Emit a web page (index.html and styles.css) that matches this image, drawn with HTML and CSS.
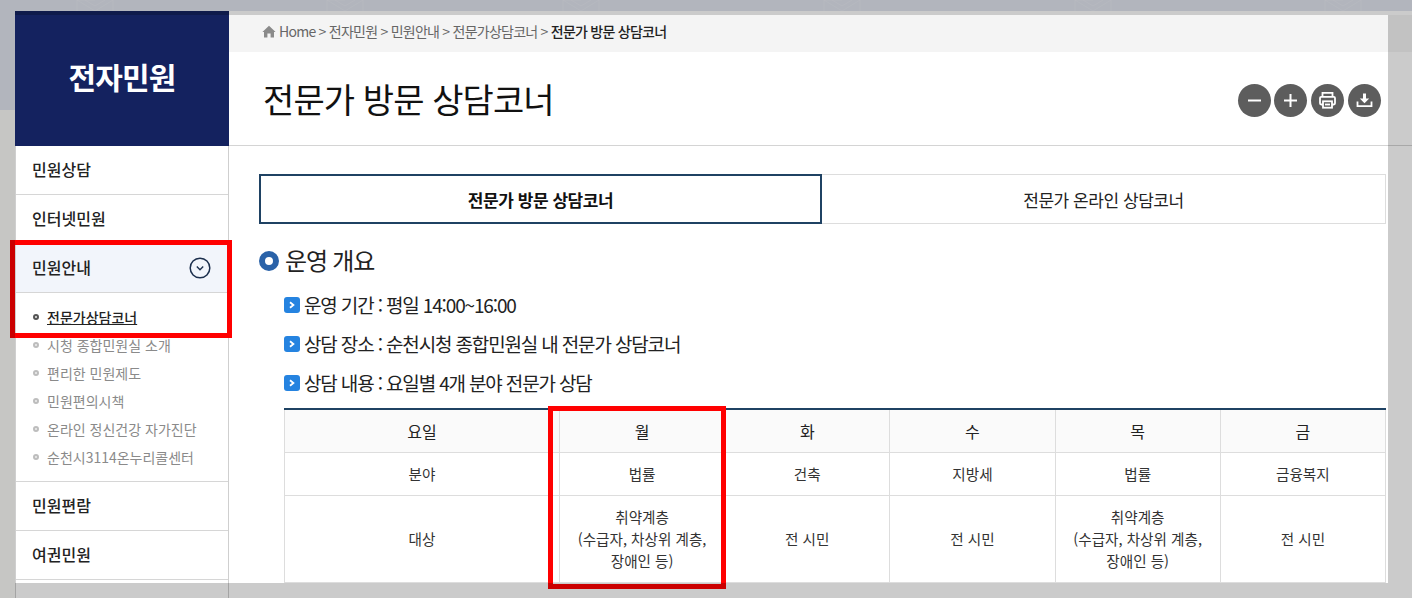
FILE: index.html
```html
<!DOCTYPE html>
<html lang="ko">
<head>
<meta charset="utf-8">
<title>전문가 방문 상담코너</title>
<link rel="stylesheet" href="styles.css">
</head>
<body>
<div class="stage">
  <svg class="pattern" width="1412" height="11" viewBox="0 0 1412 11" fill="none" stroke="#fff" stroke-opacity=".16" aria-hidden="true">
    <defs>
      <g id="mark"><path d="M0 0 18 11M8 0 18 6M18 0H0M36 0 18 11M28 0 18 6M0 0V11M36 0V11"/></g>
    </defs>
    <use href="#mark" x="77"/><use href="#mark" x="327"/><use href="#mark" x="563"/><use href="#mark" x="824"/><use href="#mark" x="1075"/><use href="#mark" x="1325"/>
  </svg>
  <aside class="sidebar">
    <h2 class="logo">전자민원</h2>
    <nav class="nav">
      <a class="nav-item">민원상담</a>
      <a class="nav-item">인터넷민원</a>
      <a class="nav-item nav-open">민원안내
        <svg class="nav-toggle" width="22" height="22" viewBox="0 0 22 22" fill="none" stroke="#1c2f4d" aria-hidden="true">
          <circle cx="11" cy="11" r="9.8" stroke-width="1.5"/><path d="M7.8 9.6 11 12.8l3.2-3.2" stroke-width="1.4"/>
        </svg>
      </a>
      <ul class="sub">
        <li class="sub-item sub-active"><span>전문가상담코너</span></li>
        <li class="sub-item"><span>시청 종합민원실 소개</span></li>
        <li class="sub-item"><span>편리한 민원제도</span></li>
        <li class="sub-item"><span>민원편의시책</span></li>
        <li class="sub-item"><span>온라인 정신건강 자가진단</span></li>
        <li class="sub-item"><span>순천시3114온누리콜센터</span></li>
      </ul>
      <a class="nav-item">민원편람</a>
      <a class="nav-item">여권민원</a>
    </nav>
  </aside>
  <main class="main">
    <div class="crumbs">
      <svg class="home" width="14" height="13" viewBox="0 0 14 13" aria-hidden="true"><path fill="#8a8a8a" d="M7 .8 13.6 7H12v5.4H8.6V8.6H5.4v3.8H2V7H.4z"/></svg>
      <span>Home &gt; 전자민원 &gt; 민원안내 &gt; 전문가상담코너 &gt; </span><b>전문가 방문 상담코너</b>
    </div>
    <header class="title-bar">
      <h1 class="title">전문가 방문 상담코너</h1>
      <div class="tools">
        <span class="tool"><svg width="33" height="33" viewBox="0 0 33 33" fill="none" stroke="#fff" stroke-width="2"><path d="M10 16.5h13"/></svg></span>
        <span class="tool"><svg width="33" height="33" viewBox="0 0 33 33" fill="none" stroke="#fff" stroke-width="2"><path d="M10 16.5h13M16.5 10v13"/></svg></span>
        <span class="tool"><svg width="33" height="33" viewBox="0 0 33 33" fill="none" stroke="#fff" stroke-width="1.8"><path d="M11.5 13V8.8h10V13"/><rect x="9" y="12.8" width="15" height="7.7" rx="1.2"/><rect x="12" y="17.3" width="9" height="6.4" fill="#5d5d5d"/><path d="M14 20.5h5"/></svg></span>
        <span class="tool"><svg width="33" height="33" viewBox="0 0 33 33" fill="none" stroke="#fff" stroke-width="1.8"><path d="M9.5 17.5v4.7h14v-4.7"/><path d="M16.5 9.5v6" stroke-width="3"/><path d="M11.8 14.5h9.4l-4.7 4.8z" fill="#fff" stroke="none"/></svg></span>
      </div>
    </header>
    <section class="content">
      <div class="tabs">
        <a class="tab tab-on">전문가 방문 상담코너</a>
        <a class="tab">전문가 온라인 상담코너</a>
      </div>
      <h3 class="heading"><i class="donut"></i><span class="heading-text">운영 개요</span></h3>
      <ul class="facts">
        <li class="fact"><i class="chev"><svg width="16" height="16" viewBox="0 0 16 16" fill="none" stroke="#fff" stroke-width="1.8"><path d="M6 5.2 9.4 8 6 10.8"/></svg></i>운영 기간 : 평일 14:00~16:00</li>
        <li class="fact"><i class="chev"><svg width="16" height="16" viewBox="0 0 16 16" fill="none" stroke="#fff" stroke-width="1.8"><path d="M6 5.2 9.4 8 6 10.8"/></svg></i>상담 장소 : 순천시청 종합민원실 내 전문가 상담코너</li>
        <li class="fact"><i class="chev"><svg width="16" height="16" viewBox="0 0 16 16" fill="none" stroke="#fff" stroke-width="1.8"><path d="M6 5.2 9.4 8 6 10.8"/></svg></i>상담 내용 : 요일별 4개 분야 전문가 상담</li>
      </ul>
      <table class="schedule">
        <colgroup><col class="col-head"><col class="col-mon"><col><col><col><col></colgroup>
        <tr class="row-days"><th>요일</th><th>월</th><th>화</th><th>수</th><th>목</th><th>금</th></tr>
        <tr class="row-field"><td>분야</td><td>법률</td><td>건축</td><td>지방세</td><td>법률</td><td>금융복지</td></tr>
        <tr class="row-target"><td>대상</td><td>취약계층<br>(수급자, 차상위 계층,<br>장애인 등)</td><td>전 시민</td><td>전 시민</td><td>취약계층<br>(수급자, 차상위 계층,<br>장애인 등)</td><td>전 시민</td></tr>
      </table>
    </section>
  </main>
  <div class="mark mark-nav"></div>
  <div class="mark mark-col"></div>
  <div class="dim"></div>
</div>
</body>
</html>
```
FILE: styles.css
```css
* { box-sizing: border-box; }
html, body { margin: 0; padding: 0; }
body { font-family: "Noto Sans CJK KR", "Noto Sans", sans-serif; color: #222; }
h1, h2, h3, ul { margin: 0; padding: 0; list-style: none; }
i { font-style: normal; }

.stage {
  position: relative;
  width: 1412px;
  height: 598px;
  overflow: hidden;
  display: flex;
  align-items: stretch;
  padding: 11px 0 0 15px;
  background: linear-gradient(#e0e4ee 110px, #f9f9f7 110px);
}
.pattern { position: absolute; left: 0; top: 0; }

.sidebar { width: 214px; flex: none; display: flex; flex-direction: column; }
.logo {
  height: 135px;
  background: #14225f;
  color: #fff;
  font-size: 30px;
  font-weight: 700;
  letter-spacing: -.8px;
  line-height: 131px;
  text-align: center;
}
.nav {
  flex: 1;
  background: #fff;
  border-left: 1px solid #cfcfcf;
  border-right: 1px solid #cfcfcf;
}
.nav-item {
  display: flex;
  align-items: center;
  justify-content: space-between;
  height: 49px;
  padding: 0 17px 3px 16px;
  border-bottom: 1px solid #d6d6d6;
  font-size: 16px;
  font-weight: 500;
  color: #222;
}
.nav-open { background: #f2f5fb; }
.nav-toggle { display: block; margin-top: 3px; }
.sub { padding: 11px 0 9px; border-bottom: 1px solid #d6d6d6; }
.sub-item {
  position: relative;
  height: 28px;
  line-height: 27px;
  padding-left: 31px;
  font-size: 14px;
  color: #8a8a8a;
}
.sub-item::before {
  content: "";
  box-sizing: border-box;
  position: absolute;
  left: 17px;
  top: 10px;
  width: 6px;
  height: 6px;
  border: 2px solid #bdbdbd;
  border-radius: 50%;
  background: #eee;
}
.sub-active { color: #222; font-weight: 500; }
.sub-active span { text-decoration: underline; }
.sub-active::before { border-color: #555; }

.main { flex: 1; min-width: 0; background: #fff; padding-top: 4px; }
.crumbs {
  display: flex;
  align-items: center;
  height: 37px;
  padding: 0 0 5px 33px;
  background: #f4f4f4;
  font-size: 14px;
  letter-spacing: -.75px;
  color: #666;
  white-space: pre;
}
.home { margin-right: 3px; flex: none; }
.crumbs b { font-weight: 500; color: #222; }
.title-bar {
  display: flex;
  align-items: center;
  justify-content: space-between;
  height: 94px;
  padding: 0 31px 0 34px;
  border-bottom: 1px solid #d4d4d4;
}
.title { font-size: 34px; font-weight: 400; letter-spacing: -.9px; color: #111; }
.tools { display: flex; gap: 4px; margin-top: 4px; }
.tool { display: block; width: 33px; height: 33px; border-radius: 50%; background: #5d5d5d; }
.tool:first-child { margin-right: -1px; }
.tool svg { display: block; }

.content { padding: 28px 26px 0 30px; }
.tabs { display: flex; height: 50px; }
.tab {
  flex: 1;
  display: flex;
  align-items: center;
  justify-content: center;
  border: 1px solid #ddd;
  border-left: 0;
  font-size: 17px;
  letter-spacing: -.45px;
  color: #222;
}
.tab-on {
  flex: 0 0 563px;
  border: 2px solid #1f4263;
  font-weight: 700;
  color: #111;
}
.heading {
  display: flex;
  align-items: center;
  gap: 6px;
  height: 34px;
  margin-top: 20px;
  font-size: 24px;
  font-weight: 400;
  letter-spacing: -1.2px;
  color: #222;
}
.heading-text { padding-bottom: 4px; }
.donut { width: 20px; height: 20px; border-radius: 50%; border: 6px solid #2a62a8; background: #fff; }
.facts { margin-top: 7px; padding-left: 25px; }
.fact {
  display: flex;
  align-items: center;
  gap: 4px;
  height: 39px;
  font-size: 19px;
  letter-spacing: -1.15px;
  color: #222;
}
.chev { display: block; width: 16px; height: 16px; border-radius: 3px; background: #2583e0; }
.chev svg { display: block; }

.schedule {
  width: 1102px;
  margin: 6px 0 0 25px;
  border-collapse: collapse;
  table-layout: fixed;
  border-top: 2px solid #1f4263;
  font-size: 14.6px;
  line-height: 22px;
  color: #333;
}
.col-head { width: 275px; }
.schedule th, .schedule td {
  border: 1px solid #ddd;
  padding: 1px 0 0;
  text-align: center;
  vertical-align: middle;
}
.schedule tr:first-child th { border-top: 0; padding-top: 0; }
.schedule th { background: #fafafa; font-size: 16px; font-weight: 400; color: #222; }
.row-days { height: 43px; }
.row-field { height: 43px; }
.row-target { height: 87px; }

.mark { position: absolute; border: 5px solid #f00; }
.mark-nav { left: 10px; top: 240px; width: 222px; height: 98px; }
.mark-col { left: 548px; top: 406px; width: 178px; height: 183px; }
.dim {
  position: absolute;
  left: 15px;
  top: 15px;
  width: 1373px;
  height: 568px;
  box-shadow: 0 0 0 2000px rgba(0, 0, 0, .205);
  pointer-events: none;
}
```
